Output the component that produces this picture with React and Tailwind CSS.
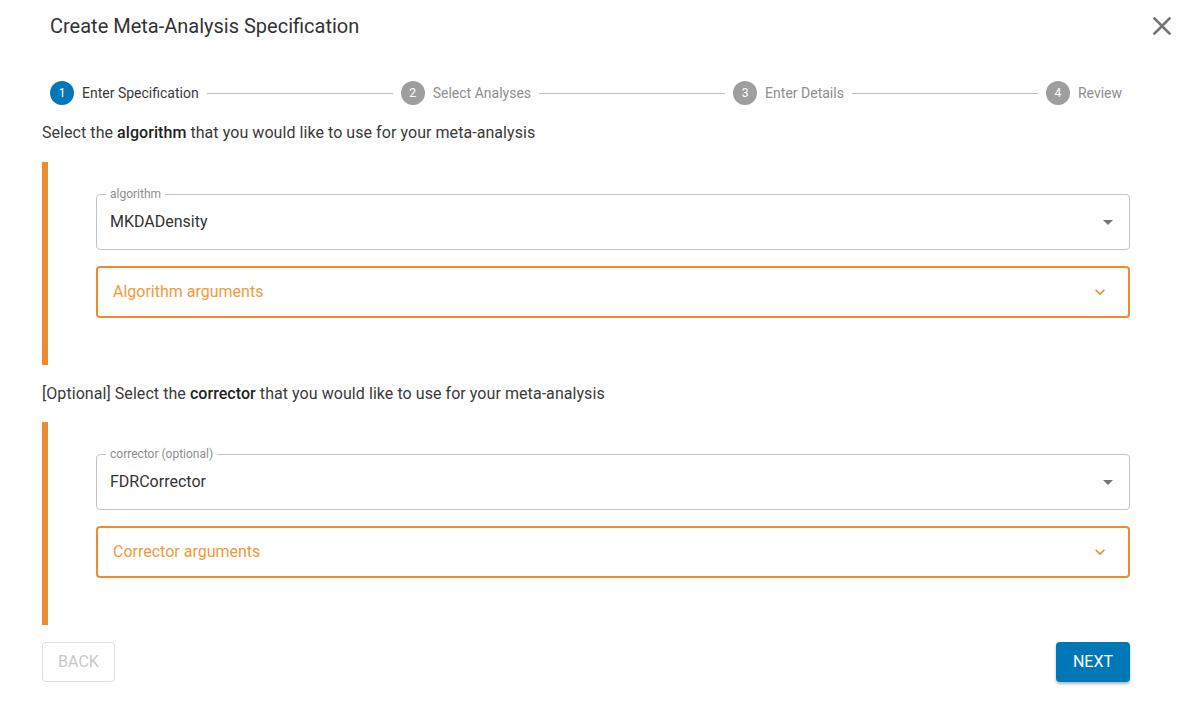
import React from 'react';

// Stepper step definitions
const steps = ['Enter Specification', 'Select Analyses', 'Enter Details', 'Review'];

const Step = ({ index, label, active }) => (
  <div className="flex items-center gap-[8px] shrink-0">
    <div
      className={
        'w-[24px] h-[24px] rounded-full flex items-center justify-center text-[12px] text-white ' +
        (active ? 'bg-[#0077b6]' : 'bg-[#9e9e9e]')
      }
    >
      {index}
    </div>
    <span className={'text-[14px] ' + (active ? 'text-[#3a3a3a]' : 'text-[#8e8e8e]')}>{label}</span>
  </div>
);

const Stepper = () => (
  <div className="flex items-center h-[24px] px-[8px]">
    {steps.map((label, i) => (
      <React.Fragment key={label}>
        <Step index={i + 1} label={label} active={i === 0} />
        {i < steps.length - 1 && <div className="flex-1 h-px bg-[#bdbdbd] mx-[8px]"></div>}
      </React.Fragment>
    ))}
  </div>
);

const SelectField = ({ label, value }) => (
  <div className="relative h-[56px] border border-[#c4c4c4] rounded-[4px] flex items-center pl-[13px] pr-[14px]">
    <span className="absolute left-[9px] -top-[9px] bg-white px-[4px] text-[12px] leading-[16px] text-[#8e8e8e]">
      {label}
    </span>
    <span className="flex-1 text-[16px] text-[#333333]">{value}</span>
    <svg width="24" height="24" viewBox="0 0 24 24" className="mr-[-5px]">
      <path d="M7 10l5 5 5-5z" fill="#757575" />
    </svg>
  </div>
);

const ArgsAccordion = ({ title }) => (
  <div className="h-[52px] border-2 border-[#ef8b2c] rounded-[4px] flex items-center pl-[15px] pr-[18px]">
    <span className="flex-1 text-[16px] text-[#f29a3b]">{title}</span>
    <svg width="20" height="20" viewBox="0 0 24 24">
      <path d="M7.41 8.59L12 13.17l4.59-4.58L18 10l-6 6-6-6 1.41-1.41z" fill="#ef8b2c" />
    </svg>
  </div>
);

const Section = ({ fieldLabel, value, argsTitle }) => (
  <div className="h-[203px] border-l-[6px] border-[#ef8b2c] pl-[48px] pt-[32px] flex flex-col gap-[16px]">
    <SelectField label={fieldLabel} value={value} />
    <ArgsAccordion title={argsTitle} />
  </div>
);

export default function App() {
  return (
    <div className="w-[1180px] h-[705px] bg-white font-['Roboto',sans-serif] overflow-hidden">
      <div className="h-[52px] flex items-center justify-between pl-[50px] pr-[2px]">
        <h2 className="text-[20px] text-[#333333]">Create Meta-Analysis Specification</h2>
        <button className="w-[32px] h-[40px] flex items-center justify-center">
          <svg width="32" height="32" viewBox="0 0 24 24">
            <path
              d="M19 6.41L17.59 5 12 10.59 6.41 5 5 6.41 10.59 12 5 17.59 6.41 19 12 13.41 17.59 19 19 17.59 13.41 12z"
              fill="#757575"
            />
          </svg>
        </button>
      </div>

      <div className="pl-[42px] pr-[50px]">
        <div className="mt-[29px]">
          <Stepper />
        </div>

        <p className="mt-[16px] text-[16px] leading-[24px] tracking-[0.06px] text-[#3a3a3a]">
          Select the <span className="font-medium text-[#222222]">algorithm</span> that you would like to use for your
          meta-analysis
        </p>

        <div className="mt-[17px]">
          <Section fieldLabel="algorithm" value="MKDADensity" argsTitle="Algorithm arguments" />
        </div>

        <p className="mt-[17px] text-[16px] leading-[24px] tracking-[0.06px] text-[#3a3a3a]">
          [Optional] Select the <span className="font-medium text-[#222222]">corrector</span> that you would like to use
          for your meta-analysis
        </p>

        <div className="mt-[16px]">
          <Section fieldLabel="corrector (optional)" value="FDRCorrector" argsTitle="Corrector arguments" />
        </div>

        <div className="mt-[17px] flex justify-between">
          <button className="w-[73px] h-[40px] border border-[#e0e0e0] rounded-[4px] text-[16px] text-[#c8c8c8]">
            BACK
          </button>
          <button className="w-[74px] h-[40px] bg-[#0077b6] rounded-[4px] text-[16px] text-white shadow-[0_2px_3px_rgba(0,0,0,0.3)]">
            NEXT
          </button>
        </div>
      </div>
    </div>
  );
}
